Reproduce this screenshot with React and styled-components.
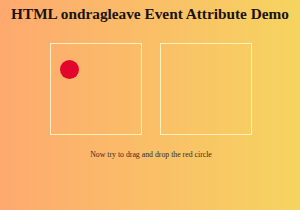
import React from 'react';
import styled, { createGlobalStyle } from 'styled-components';

const GlobalStyle = createGlobalStyle`
	html, body {
		margin: 0;
		padding: 0;
	}
	body {
		font-family: "Liberation Serif", "Times New Roman", serif;
	}
`;

const Page = styled.div`
	width: 300px;
	height: 210px;
	background: linear-gradient(to right, #fea96f, #f6d460);
	display: flex;
	flex-direction: column;
	align-items: center;
	overflow: hidden;
`;

const Title = styled.h1`
	margin: 5px 0 0;
	font-size: 15.3px;
	font-weight: bold;
	color: #1a1410;
	line-height: 18px;
	white-space: nowrap;
`;

const Boxes = styled.div`
	display: flex;
	gap: 18px;
	margin-top: 20px;
	margin-left: 2px;
`;

const DropBox = styled.div`
	width: 92px;
	height: 92px;
	border: 1px solid rgba(255, 248, 205, 0.85);
	padding: 16px 0 0 9px;
	box-sizing: border-box;
`;

const Circle = styled.div`
	width: 19px;
	height: 19px;
	border-radius: 50%;
	background: #e3062c;
`;

const Hint = styled.p`
	margin: 15px 0 0 2px;
	font-size: 7.8px;
	color: #3a2a1e;
`;

const App = () => {
	return (
		<>
			<GlobalStyle />
			<Page>
				<Title>HTML ondragleave Event Attribute Demo</Title>
				<Boxes>
					<DropBox>
						<Circle draggable="true" />
					</DropBox>
					<DropBox />
				</Boxes>
				<Hint>Now try to drag and drop the red circle</Hint>
			</Page>
		</>
	);
};

export default App;
